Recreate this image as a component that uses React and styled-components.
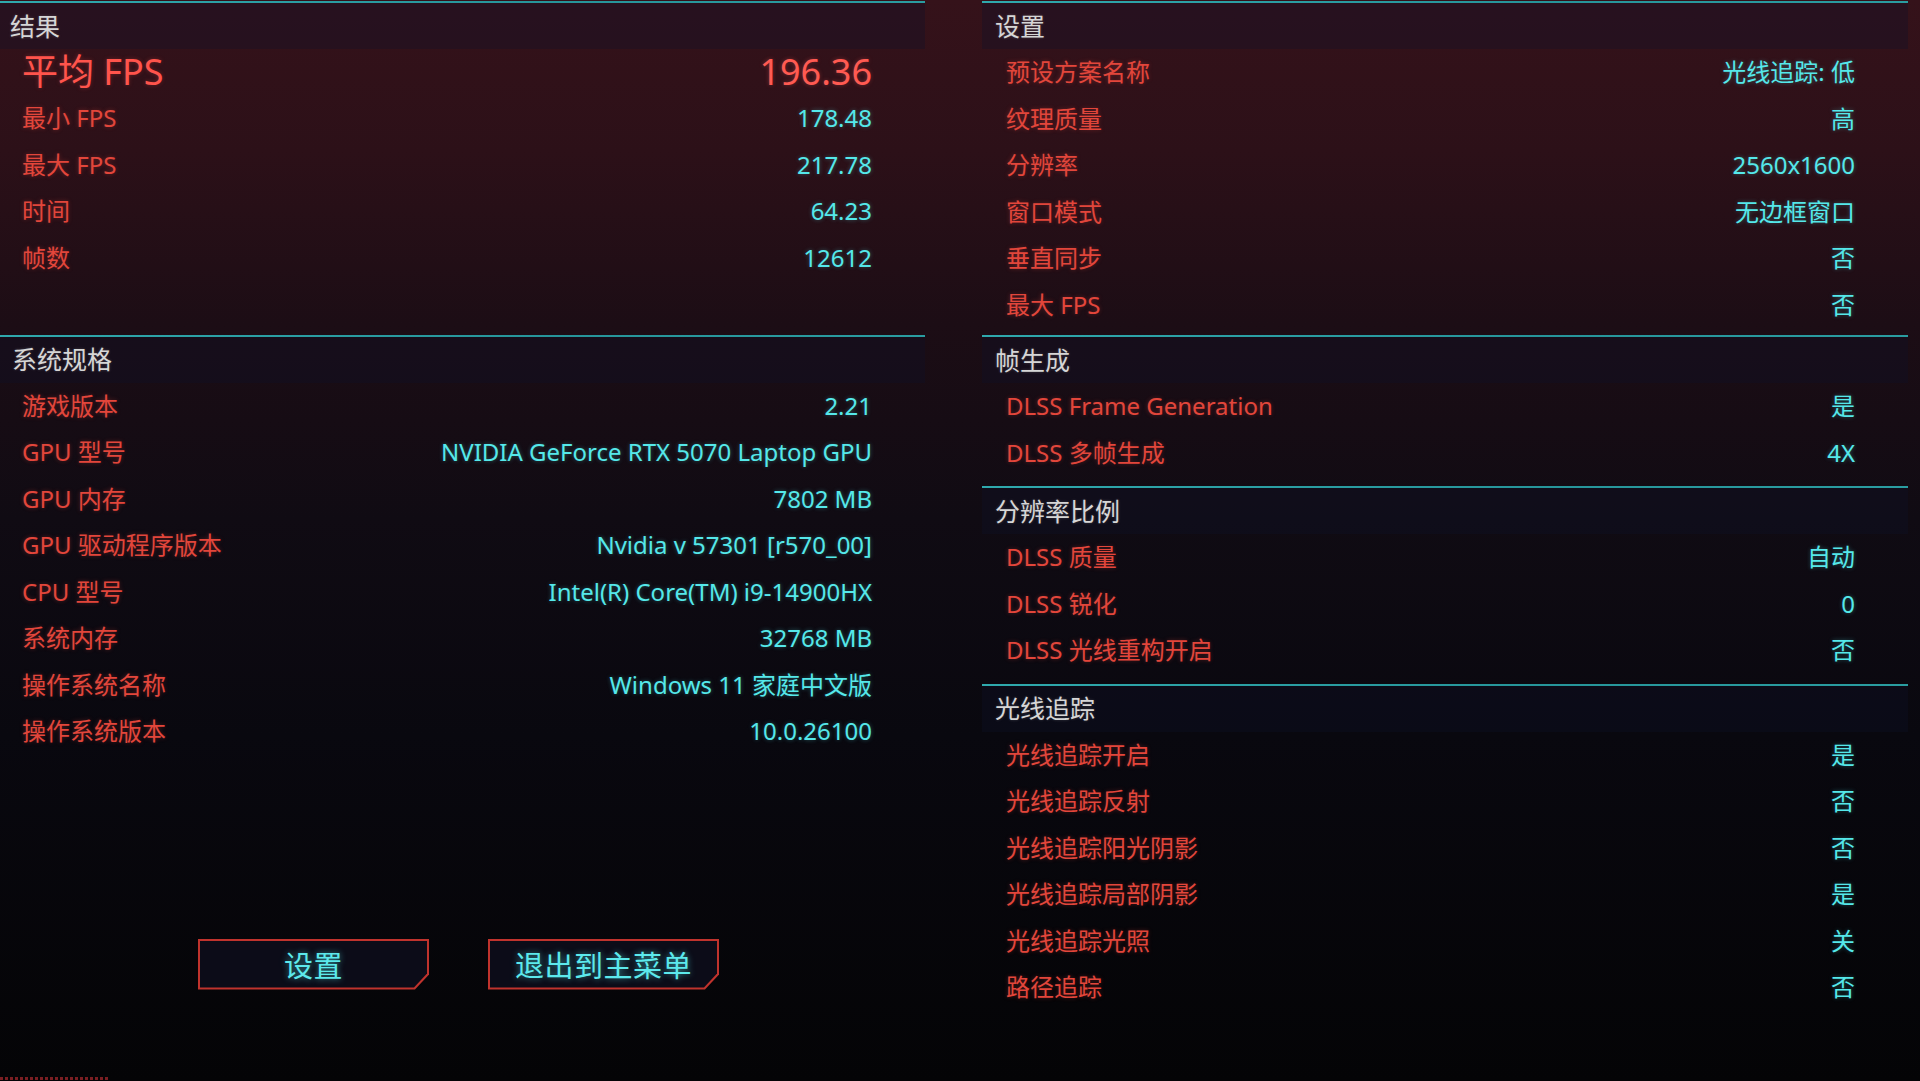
import React from "react";
import styled, { createGlobalStyle } from "styled-components";

const GlobalStyle = createGlobalStyle`
  html, body {
    margin: 0;
    padding: 0;
    width: 1920px;
    height: 1081px;
    overflow: hidden;
    background: #050508;
  }
  body {
    font-family: "Noto Sans", "Noto Sans CJK SC", sans-serif;
  }
`;

const results = [
  ["最小 FPS", "178.48"],
  ["最大 FPS", "217.78"],
  ["时间", "64.23"],
  ["帧数", "12612"],
];

const specs = [
  ["游戏版本", "2.21"],
  ["GPU 型号", "NVIDIA GeForce RTX 5070 Laptop GPU"],
  ["GPU 内存", "7802 MB"],
  ["GPU 驱动程序版本", "Nvidia v 57301 [r570_00]"],
  ["CPU 型号", "Intel(R) Core(TM) i9-14900HX"],
  ["系统内存", "32768 MB"],
  ["操作系统名称", "Windows 11 家庭中文版"],
  ["操作系统版本", "10.0.26100"],
];

const settingGroups = [
  {
    title: "设置",
    pad: 7,
    rows: [
      ["预设方案名称", "光线追踪: 低"],
      ["纹理质量", "高"],
      ["分辨率", "2560x1600"],
      ["窗口模式", "无边框窗口"],
      ["垂直同步", "否"],
      ["最大 FPS", "否"],
    ],
  },
  {
    title: "帧生成",
    pad: 10,
    rows: [
      ["DLSS Frame Generation", "是"],
      ["DLSS 多帧生成", "4X"],
    ],
  },
  {
    title: "分辨率比例",
    pad: 10,
    rows: [
      ["DLSS 质量", "自动"],
      ["DLSS 锐化", "0"],
      ["DLSS 光线重构开启", "否"],
    ],
  },
  {
    title: "光线追踪",
    pad: 0,
    rows: [
      ["光线追踪开启", "是"],
      ["光线追踪反射", "否"],
      ["光线追踪阳光阴影", "否"],
      ["光线追踪局部阴影", "是"],
      ["光线追踪光照", "关"],
      ["路径追踪", "否"],
    ],
  },
];

const Screen = styled.div`
  width: 1920px;
  height: 1081px;
  display: flex;
  flex-direction: column;
  background: linear-gradient(
    180deg,
    #35121a 0%,
    #2c1018 14%,
    #1c0d15 30%,
    #100b13 48%,
    #09080f 68%,
    #040406 100%
  );
`;

const Main = styled.div`
  flex: 1;
  display: flex;
  gap: 57px;
  padding-top: 1px;
`;

const Column = styled.div`
  width: ${(p) => p.$width}px;
  display: flex;
  flex-direction: column;
`;

const Section = styled.section`
  border-top: 2px solid #2a9ea2;
  border-image: linear-gradient(90deg, #2fa9ad 0%, #26959a 60%, #2a9da1 100%) 1;
  padding-bottom: ${(p) => p.$pad}px;
`;

const Header = styled.div`
  height: 46px;
  display: flex;
  align-items: center;
  padding-left: ${(p) => p.$indent}px;
  background: rgba(14, 18, 42, 0.34);
  color: #d6d6d6;
  font-size: 25px;
  line-height: 1;
  text-shadow: 0 0 3px rgba(210, 210, 210, 0.25);
`;

const Row = styled.div`
  height: ${(p) => (p.$big ? 46 : 46.5)}px;
  display: flex;
  align-items: center;
  justify-content: space-between;
  padding: 0 53px 0 ${(p) => p.$indent}px;
  line-height: 1;
`;

const Label = styled.span`
  color: ${(p) => (p.$big ? "#ff544c" : "#e2463b")};
  font-size: ${(p) => (p.$big ? 36 : 24)}px;
  text-shadow: 0 0 4px rgba(226, 70, 59, 0.35);
`;

const Value = styled.span`
  color: ${(p) => (p.$big ? "#ff5a52" : "#55e8ea")};
  font-size: ${(p) => (p.$big ? 36 : 24)}px;
  text-shadow: 0 0 4px
    ${(p) => (p.$big ? "rgba(255, 90, 82, 0.35)" : "rgba(82, 230, 232, 0.35)")};
`;

const Buttons = styled.div`
  display: flex;
  gap: 59px;
  margin-top: 184px;
  padding-left: 198px;
`;

const Button = styled.button`
  position: relative;
  width: 231px;
  height: 51px;
  padding: 0;
  border: none;
  background: #c0332d;
  clip-path: polygon(0 0, 100% 0, 100% calc(100% - 15px), calc(100% - 14px) 100%, 0 100%);
  cursor: pointer;

  &::before {
    content: "";
    position: absolute;
    inset: 2px;
    background: #0c0c18;
    clip-path: polygon(0 0, 100% 0, 100% calc(100% - 14px), calc(100% - 13px) 100%, 0 100%);
  }

  span {
    position: relative;
    display: block;
    color: #5ce9ec;
    font-family: "Noto Sans CJK SC", sans-serif;
    font-size: 29px;
    line-height: 1;
    letter-spacing: 0.5px;
    text-shadow: 0 0 6px rgba(80, 230, 235, 0.6);
  }
`;

const Footer = styled.div`
  height: 6px;
  display: flex;
  align-items: flex-end;
`;

const Dots = styled.div`
  width: 108px;
  height: 3px;
  margin-bottom: 1px;
  background: repeating-linear-gradient(
    90deg,
    #7a1e22 0px,
    #7a1e22 3px,
    transparent 3px,
    transparent 5px
  );
`;

const DataRow = ({ label, value, big, indent }) => (
  <Row $big={big} $indent={indent}>
    <Label $big={big}>{label}</Label>
    <Value $big={big}>{value}</Value>
  </Row>
);

export default function App() {
  return (
    <>
      <GlobalStyle />
      <Screen>
        <Main>
          <Column $width={925}>
            <Section $pad={53.5}>
              <Header $indent={10}>结果</Header>
              <DataRow big indent={22} label="平均 FPS" value="196.36" />
              {results.map(([l, v]) => (
                <DataRow key={l} indent={22} label={l} value={v} />
              ))}
            </Section>
            <Section $pad={0}>
              <Header $indent={12}>系统规格</Header>
              {specs.map(([l, v]) => (
                <DataRow key={l} indent={22} label={l} value={v} />
              ))}
            </Section>
            <Buttons>
              <Button>
                <span>设置</span>
              </Button>
              <Button>
                <span>退出到主菜单</span>
              </Button>
            </Buttons>
          </Column>

          <Column $width={926}>
            {settingGroups.map((g) => (
              <Section key={g.title} $pad={g.pad}>
                <Header $indent={13}>{g.title}</Header>
                {g.rows.map(([l, v]) => (
                  <DataRow key={l} indent={24} label={l} value={v} />
                ))}
              </Section>
            ))}
          </Column>
        </Main>
        <Footer>
          <Dots />
        </Footer>
      </Screen>
    </>
  );
}
